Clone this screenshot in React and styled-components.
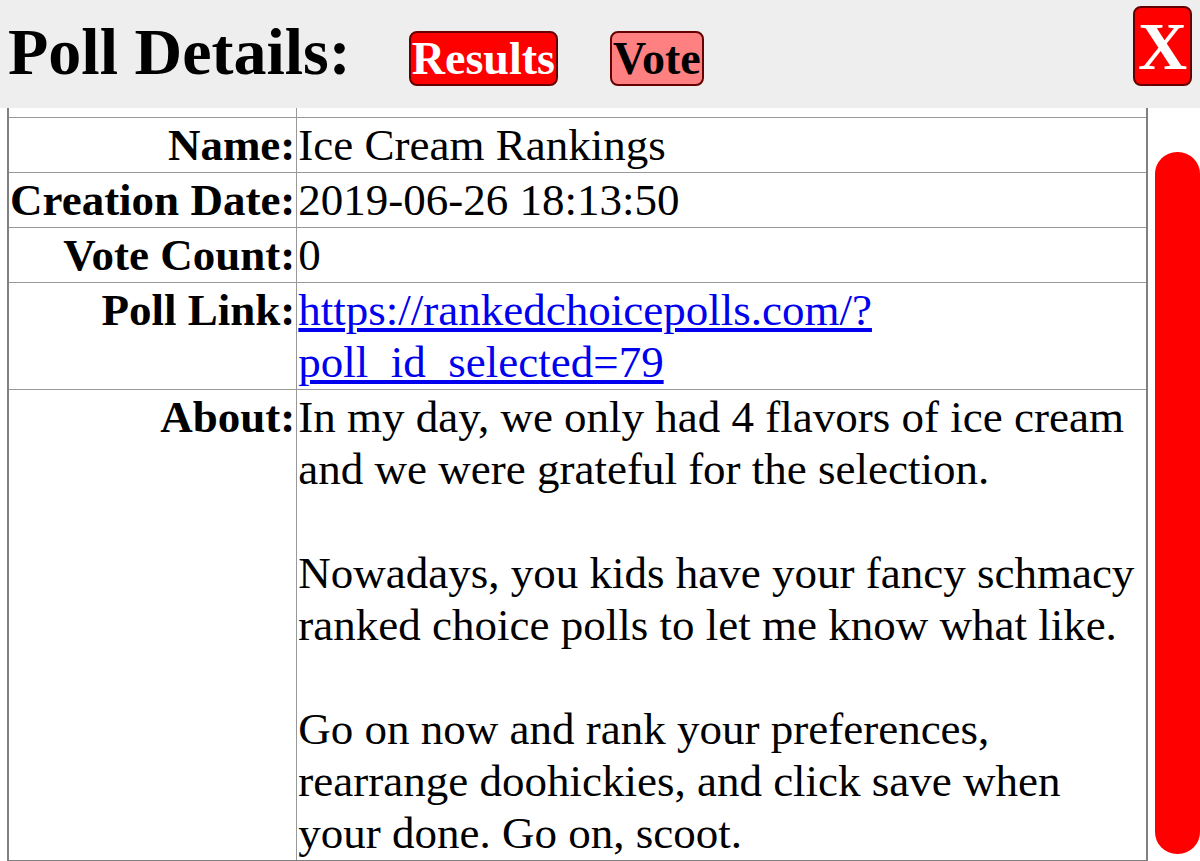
import React, { useLayoutEffect, useRef, useState } from 'react';
import styled, { createGlobalStyle } from 'styled-components';

const serif = `"Liberation Serif", "Times New Roman", Times, serif`;

const GlobalStyle = createGlobalStyle`
  html, body {
    margin: 0;
    padding: 0;
    height: 100%;
    overflow: hidden;
    background: #ffffff;
    font-family: ${serif};
  }
`;

const Page = styled.div`
  display: flex;
  flex-direction: column;
  height: 100vh;
  font-family: ${serif};
`;

const Header = styled.div`
  display: flex;
  align-items: flex-start;
  flex: 0 0 108px;
  box-sizing: border-box;
  padding: 6px 8px 0 8px;
  background: #eeeeee;
`;

const Title = styled.h1`
  margin: 13px 58px 0 0;
  font-family: ${serif};
  font-size: 66px;
  line-height: 1;
  font-weight: bold;
  color: #000;
`;

const TabButton = styled.button`
  margin: 25px 52px 0 0;
  padding: 0 1px;
  height: 55px;
  font-family: ${serif};
  font-size: 46px;
  font-weight: bold;
  line-height: 51px;
  border: 2px solid #660000;
  border-radius: 8px;
  background: ${(p) => (p.active ? '#ff0000' : '#ff8080')};
  color: ${(p) => (p.active ? '#ffffff' : '#000000')};
  cursor: pointer;
`;

const CloseButton = styled.button`
  margin-left: auto;
  width: 59px;
  height: 80px;
  padding: 0;
  font-family: ${serif};
  font-size: 68px;
  font-weight: bold;
  line-height: 76px;
  border: 2px solid #660000;
  border-radius: 8px;
  background: #ff0000;
  color: #ffffff;
  cursor: pointer;
`;

const Body = styled.div`
  flex: 1;
  display: flex;
  min-height: 0;
`;

const Scroller = styled.div`
  flex: 1;
  overflow: hidden;
  padding: 0 0 6px 7px;
`;

const Track = styled.div`
  flex: 0 0 45px;
  margin-left: 7px;
  position: relative;
  background: #ffffff;
`;

const Thumb = styled.div`
  position: absolute;
  left: 0;
  right: 0;
  background: #ff0000;
  border-radius: 22px;
`;

const DetailsTable = styled.table`
  width: 100%;
  border-collapse: collapse;
  border: 2px solid #808080;
  font-family: ${serif};
  font-size: 45px;
  line-height: normal;
`;

const Row = styled.tr``;

const Label = styled.th`
  padding: 1px;
  border: 1px solid #999999;
  text-align: right;
  vertical-align: top;
  font-weight: bold;
  white-space: nowrap;
  width: 1%;
`;

const Value = styled.td`
  padding: 1px;
  border: 1px solid #999999;
  text-align: left;
  vertical-align: top;
  font-weight: normal;
`;

const PollLink = styled.a`
  color: #0000ee;
  text-decoration: underline;
`;

const rows = [
  { label: 'Poll ID:', value: '79' },
  { label: 'Name:', value: 'Ice Cream Rankings' },
  { label: 'Creation Date:', value: '2019-06-26 18:13:50' },
  { label: 'Vote Count:', value: '0' },
];

const App = () => {
  const scrollRef = useRef(null);
  const [thumb, setThumb] = useState({ top: 0, height: 0 });

  useLayoutEffect(() => {
    const el = scrollRef.current;
    if (!el) return;
    el.scrollTop = 47;
    const ch = el.clientHeight;
    const sh = el.scrollHeight;
    setThumb({ top: (el.scrollTop * ch) / sh, height: (ch * ch) / sh });
  }, []);

  return (
    <Page>
      <GlobalStyle />
      <Header>
        <Title>Poll Details:</Title>
        <TabButton active>Results</TabButton>
        <TabButton>Vote</TabButton>
        <CloseButton>X</CloseButton>
      </Header>
      <Body>
        <Scroller ref={scrollRef}>
          <DetailsTable>
            <tbody>
              {rows.map((r) => (
                <Row key={r.label}>
                  <Label>{r.label}</Label>
                  <Value>{r.value}</Value>
                </Row>
              ))}
              <Row>
                <Label>Poll Link:</Label>
                <Value>
                  <PollLink href="https://rankedchoicepolls.com/?poll_id_selected=79">
                    https://rankedchoicepolls.com/?<wbr />poll_id_selected=79
                  </PollLink>
                </Value>
              </Row>
              <Row>
                <Label>About:</Label>
                <Value>
                  In my day, we only had 4 flavors of ice cream and we were grateful for the selection.
                  <br />
                  <br />
                  Nowadays, you kids have your fancy schmacy ranked choice polls to let me know what like.
                  <br />
                  <br />
                  Go on now and rank your preferences, rearrange doohickies, and click save when your done. Go on, scoot.
                </Value>
              </Row>
            </tbody>
          </DetailsTable>
        </Scroller>
        <Track>
          <Thumb style={{ top: thumb.top, height: thumb.height }} />
        </Track>
      </Body>
    </Page>
  );
};

export default App;
